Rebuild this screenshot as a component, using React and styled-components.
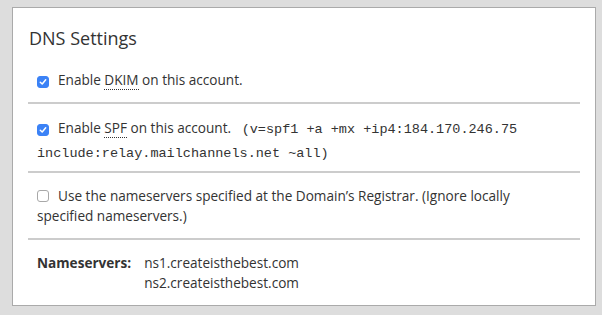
import React from "react";
import styled, { createGlobalStyle } from "styled-components";

const Global = createGlobalStyle`
  html, body { margin: 0; padding: 0; background: #dddddd; }
  body { font-family: "Open Sans", "Noto Sans", sans-serif; color: #333333; }
`;

const Page = styled.div`
  padding: 7px 6px 9px 12px;
`;

const Panel = styled.section`
  background: #ffffff;
  border: 1px solid #aaaaaa;
  padding: 0 15px;
`;

const Title = styled.h2`
  margin: 0;
  padding: 18px 0 20px 1px;
  font-size: 18px;
  line-height: 24px;
  font-weight: 400;
  color: #333333;
`;

const Row = styled.div`
  display: flex;
  align-items: flex-start;
  padding: ${(p) => p.$pad || "13px 20px 12px 9px"};
  border-bottom: ${(p) => (p.$last ? "none" : "2px solid #cccccc")};
  font-size: 13.6px;
  line-height: ${(p) => p.$lh || "20px"};
`;

const Label = styled.label`
  display: block;
`;

const Box = styled.span`
  display: inline-flex;
  align-items: center;
  justify-content: center;
  box-sizing: border-box;
  width: 12px;
  height: 12px;
  border-radius: 3px;
  vertical-align: -1px;
  margin-right: 9px;
  background: ${(p) => (p.$checked ? "#3b82f6" : "#ffffff")};
  border: 1px solid ${(p) => (p.$checked ? "#3b82f6" : "#a8a8a8")};
`;

const Abbr = styled.abbr`
  text-decoration: none;
  border-bottom: 1px dotted #333333;
`;

const Mono = styled.span`
  font-family: "Liberation Mono", "Courier New", monospace;
  font-size: 13.5px;
  line-height: 14px;
`;

const Grid = styled.div`
  display: grid;
  grid-template-columns: auto 1fr;
  column-gap: 13px;
`;

const Bold = styled.span`
  font-weight: 700;
`;

const Check = ({ checked }) => (
  <Box $checked={checked}>
    {checked && (
      <svg width="8" height="8" viewBox="0 0 8 8">
        <path d="M1.3 4.2 L3.2 6 L6.7 1.8" fill="none" stroke="#fff" strokeWidth="1.5" strokeLinecap="round" strokeLinejoin="round" />
      </svg>
    )}
  </Box>
);

export default function App() {
  return (
    <>
      <Global />
      <Page>
        <Panel>
          <Title>DNS Settings</Title>
          <Row $pad="0 20px 12px 9px">
            <Label>
              <Check checked />
              Enable <Abbr title="DomainKeys Identified Mail">DKIM</Abbr> on this account.
            </Label>
          </Row>
          <Row $lh="24px" $pad="12px 20px 7px 9px">
            <Label>
              <Check checked />
              Enable <Abbr title="Sender Policy Framework">SPF</Abbr> on this account.&nbsp;&nbsp;{" "}
              <Mono>(v=spf1 +a +mx +ip4:184.170.246.75 include:relay.mailchannels.net ~all)</Mono>
            </Label>
          </Row>
          <Row>
            <Label>
              <Check />
              Use the nameservers specified at the Domain’s Registrar. (Ignore locally specified nameservers.)
            </Label>
          </Row>
          <Row $last>
            <Grid>
              <Bold>Nameservers:</Bold>
              <span>ns1.createisthebest.com</span>
              <span />
              <span>ns2.createisthebest.com</span>
            </Grid>
          </Row>
        </Panel>
      </Page>
    </>
  );
}
